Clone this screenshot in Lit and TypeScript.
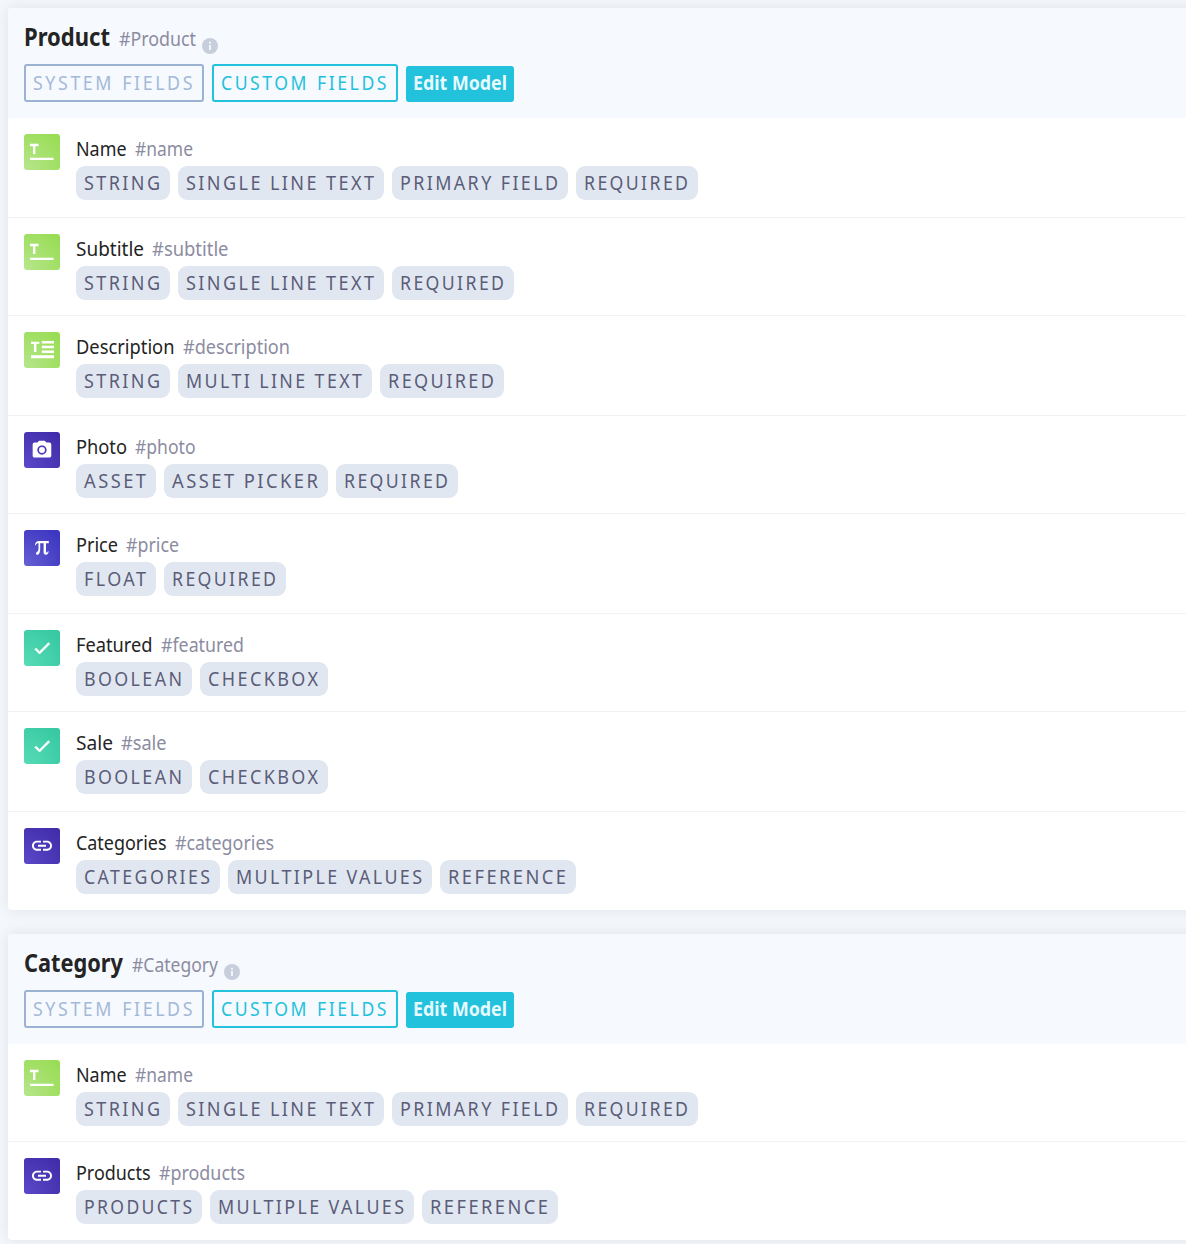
import { LitElement, html, svg, css } from "lit";
import { customElement, property } from "lit/decorators.js";

/** A piece of text with its advance width in pixels. */
type Label = [text: string, width: number];
type IconKind = "line" | "multi" | "photo" | "pi" | "check" | "link";

interface Field {
  icon: IconKind;
  name: Label;
  id: Label;
  tags: Label[];
  tall?: boolean;
}

interface Model {
  name: Label;
  id: Label;
  fields: Field[];
}

const STRING: Label = ["STRING", 94];
const SINGLE: Label = ["SINGLE LINE TEXT", 206];
const PRIMARY: Label = ["PRIMARY FIELD", 176];
const REQUIRED: Label = ["REQUIRED", 122];
const BOOLEAN: Label = ["BOOLEAN", 116];
const CHECKBOX: Label = ["CHECKBOX", 128];
const MULTIPLE: Label = ["MULTIPLE VALUES", 204];
const REFERENCE: Label = ["REFERENCE", 136];

const MODELS: Model[] = [
  {
    name: ["Product", 86],
    id: ["#Product", 77],
    fields: [
      { icon: "line", name: ["Name", 50.5], id: ["#name", 58], tags: [STRING, SINGLE, PRIMARY, REQUIRED], tall: true },
      { icon: "line", name: ["Subtitle", 68], id: ["#subtitle", 76.5], tags: [STRING, SINGLE, REQUIRED] },
      { icon: "multi", name: ["Description", 98.5], id: ["#description", 107], tags: [STRING, ["MULTI LINE TEXT", 194], ["REQUIRED", 124]], tall: true },
      { icon: "photo", name: ["Photo", 51], id: ["#photo", 60.5], tags: [["ASSET", 80], ["ASSET PICKER", 164], REQUIRED] },
      { icon: "pi", name: ["Price", 42], id: ["#price", 53], tags: [["FLOAT", 80], REQUIRED], tall: true },
      { icon: "check", name: ["Featured", 76.5], id: ["#featured", 83], tags: [BOOLEAN, CHECKBOX] },
      { icon: "check", name: ["Sale", 37], id: ["#sale", 45.5], tags: [BOOLEAN, CHECKBOX], tall: true },
      { icon: "link", name: ["Categories", 90.5], id: ["#categories", 99], tags: [["CATEGORIES", 144], MULTIPLE, REFERENCE] },
    ],
  },
  {
    name: ["Category", 99],
    id: ["#Category", 86],
    fields: [
      { icon: "line", name: ["Name", 50.5], id: ["#name", 58], tags: [STRING, SINGLE, PRIMARY, REQUIRED] },
      { icon: "link", name: ["Products", 74.5], id: ["#products", 86], tags: [["PRODUCTS", 126], MULTIPLE, REFERENCE] },
    ],
  },
];

const GLYPHS = {
  line: svg`<path d="M6 9.8h8.5v2.4H11.4V20H9v-7.8H6zM6 23.8h23.5v2.3H6z"/>`,
  multi: svg`<path d="M7 9.8h8.3v2.3H12.4V20H9.9v-7.9H7zM17.8 9H30v2.5H17.8zM17.8 13.8H30v2.5H17.8zM17.8 18.6H30V21H17.8zM7 23.2h23v3H7z"/>`,
  photo: svg`<g transform="translate(6.8 6.9) scale(.93)"><circle cx="12" cy="12" r="3.2"/><path d="M9 2 7.17 4H4c-1.1 0-2 .9-2 2v12c0 1.1.9 2 2 2h16c1.1 0 2-.9 2-2V6c0-1.1-.9-2-2-2h-3.17L15 2H9zm3 15c-2.76 0-5-2.24-5-5s2.24-5 5-5 5 2.24 5 5-2.24 5-5 5z"/></g>`,
  pi: svg`<path d="M10.9 15.3c.5-2.9 1.8-4.2 4.2-4.2h9.7v2.2h-2.8v7.8c0 1 .2 1.5.8 1.5.6 0 .9-.4 1-1.3h.8c-.1 2.3-1 3.5-2.7 3.5-1.7 0-2.3-1.1-2.3-3.2v-8.3h-3.4v5.2c0 3.9-.9 6.2-2.7 6.2-1 0-1.5-.6-1.5-1.3 0-1.6 2.3-1.4 2.5-4.5v-5.6c-1.5 0-2.3.6-2.8 2z"/>`,
  check: svg`<g transform="translate(8 8.1) scale(.84)"><path d="M9 16.17 4.83 12l-1.42 1.41L9 19 21 7l-1.41-1.41z" stroke="#fff" stroke-width="1"/></g>`,
  link: svg`<g transform="translate(6 5.7)"><path d="M3.9 12c0-1.71 1.39-3.1 3.1-3.1h4V7H7c-2.76 0-5 2.24-5 5s2.24 5 5 5h4v-1.9H7c-1.71 0-3.1-1.39-3.1-3.1zM8 13h8v-2H8v2zm9-6h-4v1.9h4c1.71 0 3.1 1.39 3.1 3.1s-1.39 3.1-3.1 3.1h-4V17h4c2.76 0 5-2.24 5-5s-2.24-5-5-5z"/></g>`,
};

/** Text condensed to a given advance width. */
@customElement("fit-text")
export class FitText extends LitElement {
  static styles = css`
    :host { display: block; flex: none; }
    .box { display: block; height: 34px; overflow: visible; }
    .text { fill: currentColor; white-space: pre; }
  `;
  @property() text = "";
  @property({ type: Number }) width = 0;

  render() {
    return html`<svg class="box" width=${this.width} height="34">
      <text class="text" x="0" y="24" textLength=${this.width} lengthAdjust="spacingAndGlyphs">${this.text}</text>
    </svg>`;
  }
}

@customElement("field-icon")
export class FieldIcon extends LitElement {
  static styles = css`
    :host { display: block; flex: none; width: 36px; height: 36px; }
    .tile { width: 36px; height: 36px; border-radius: 3px; }
    .line, .multi { background: radial-gradient(circle at 0 100%, #b7e68d, #96dc50 100%); }
    .photo, .link { background: radial-gradient(circle at 0 100%, #5b49cb, #3f2ba6 100%); }
    .pi { background: radial-gradient(circle at 0 100%, #6661d2, #3d36c2 90%); }
    .check { background: radial-gradient(circle at 0 100%, #57dcb7, #34c7a0 100%); }
    .glyph { display: block; fill: #fff; }
  `;
  @property() kind: IconKind = "line";

  render() {
    return html`<div class="tile ${this.kind}">
      <svg class="glyph" width="36" height="36" viewBox="0 0 36 36">${GLYPHS[this.kind]}</svg>
    </div>`;
  }
}

@customElement("app-root")
export class AppRoot extends LitElement {
  static styles = css`
    :host {
      display: block;
      box-sizing: border-box;
      height: 1244px;
      overflow: hidden;
      background: #f4f8fd;
      font-family: "Noto Sans", "Open Sans", sans-serif;
      font-size: 19.4px;
      color: #242424;
    }
    .page { display: flex; flex-direction: column; gap: 24px; padding: 8px 0 0 8px; margin-right: -40px; }
    .card { background: #fff; border-radius: 4px; box-shadow: 0 0 16px rgba(0, 0, 0, 0.09); }
    .head {
      box-sizing: border-box;
      height: 110px;
      padding: 14px 16px 0;
      background: #f6f9fe;
      border-radius: 4px 4px 0 0;
    }
    .title { display: flex; height: 42px; gap: 8.5px; }
    .name { font-size: 25px; font-weight: 700; }
    .id { color: #8c8ca1; }
    .info { flex: none; margin: 15.5px 0 0 -2px; }
    .actions { display: flex; align-items: flex-end; gap: 8px; }
    .outline {
      box-sizing: border-box;
      height: 38px;
      padding: 0 7px;
      border: 2px solid #9bb2d2;
      border-radius: 3px;
      color: #a3b9d7;
      letter-spacing: 2.8px;
      word-spacing: 1px;
    }
    .active { border-color: #22c1dc; color: #22c1dc; }
    .edit {
      height: 36px;
      padding: 0 7px;
      border-radius: 3px;
      background: #22c1dc;
      color: #e6faff;
      font-weight: 700;
    }
    .row { display: flex; gap: 16px; padding: 16px; border-bottom: 1px solid #f1f2f3; height: 65px; }
    .tall { height: 67px; }
    .row:last-child { border-bottom-color: transparent; }
    .label { display: flex; gap: 8px; height: 32px; }
    .label fit-text { margin-top: -2px; }
    .tags { display: flex; gap: 8px; }
    .tag {
      height: 34px;
      padding: 0 8px;
      border-radius: 9px;
      background: #e1e7f1;
      color: #5b5d78;
      letter-spacing: 2.6px;
    }
    .tag fit-text { margin-left: -0.4px; }
  `;

  private text([text, width]: Label, inset = 0, cls = "") {
    return html`<fit-text class=${cls} .text=${text} .width=${width - inset}></fit-text>`;
  }

  private row(f: Field) {
    return html`<div class="row ${f.tall ? "tall" : ""}">
      <field-icon .kind=${f.icon}></field-icon>
      <div>
        <div class="label">${this.text(f.name)}${this.text(f.id, 0, "id")}</div>
        <div class="tags">${f.tags.map((t) => html`<div class="tag">${this.text(t, 15.6)}</div>`)}</div>
      </div>
    </div>`;
  }

  private card(m: Model) {
    return html`<section class="card">
      <header class="head">
        <div class="title">
          ${this.text(m.name, 0, "name")}${this.text(m.id, 0, "id")}
          <svg class="info" width="16" height="16" viewBox="0 0 16 16">
            <circle cx="8" cy="8" r="8" fill="#c6cfdb" />
            <path d="M7 3.8h2v2H7zM7 7h2v5H7z" fill="#f2f6fb" />
          </svg>
        </div>
        <div class="actions">
          <div class="outline">${this.text(["SYSTEM FIELDS", 162])}</div>
          <div class="outline active">${this.text(["CUSTOM FIELDS", 168])}</div>
          <div class="edit">${this.text(["Edit Model", 94])}</div>
        </div>
      </header>
      ${m.fields.map((f) => this.row(f))}
    </section>`;
  }

  render() {
    return html`<main class="page">${MODELS.map((m) => this.card(m))}</main>`;
  }
}
